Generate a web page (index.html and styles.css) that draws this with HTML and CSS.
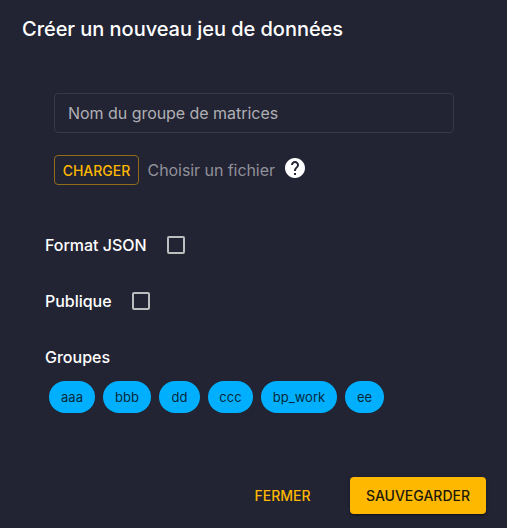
FILE: index.html
```html
<!DOCTYPE html>
<html lang="fr">
<head>
<meta charset="utf-8">
<title>Créer un nouveau jeu de données</title>
<link rel="stylesheet" href="styles.css">
</head>
<body>
<main class="dialog">
  <h2 class="title">Créer un nouveau jeu de données</h2>
  <div class="field">Nom du groupe de matrices</div>
  <div class="upload">
    <button class="btn outlined">CHARGER</button>
    <span class="hint">Choisir un fichier</span>
    <svg class="help" viewBox="0 0 24 24"><path d="M12 2C6.480 2 2 6.480 2 12s4.480 10 10 10 10-4.480 10-10S17.520 2 12 2zm1 17h-2v-2h2v2zm2.070-7.750-.9.920C13.450 12.900 13 13.500 13 15h-2v-.5c0-1.100.45-2.100 1.170-2.830l1.240-1.260c.37-.36.59-.86.59-1.410 0-1.100-.9-2-2-2s-2 .9-2 2H8c0-2.210 1.790-4 4-4s4 1.790 4 4c0 .88-.36 1.680-.93 2.250z"/></svg>
  </div>
  <div class="option"><span>Format JSON</span><span class="box"></span></div>
  <div class="option"><span>Publique</span><span class="box"></span></div>
  <div class="groups">Groupes</div>
  <div class="chips">
    <span class="chip">aaa</span><span class="chip">bbb</span><span class="chip">dd</span><span class="chip">ccc</span><span class="chip">bp_work</span><span class="chip">ee</span>
  </div>
  <footer class="actions">
    <button class="btn text">FERMER</button>
    <button class="btn contained">SAUVEGARDER</button>
  </footer>
</main>
</body>
</html>
```
FILE: styles.css
```css
* { box-sizing: border-box; }
body { margin: 0; background: #222333; }
.dialog {
  width: 507px; height: 528px; overflow: hidden;
  display: flex; flex-direction: column;
  background: #222333; color: #fff;
  font: 400 16px/24px Inter, sans-serif;
}
.title { margin: 13px 22px 0; font-size: 20px; line-height: 32px; font-weight: 500; letter-spacing: -0.04px; }
.field {
  width: 400px; height: 40px; margin: 48px 0 0 54px; padding: 0 13px;
  border: 1px solid #383947; border-radius: 4px;
  line-height: 38px; color: #b0b0b3; letter-spacing: -0.04px;
}
.upload { display: flex; align-items: center; height: 30px; margin: 22px 0 0 54px; }
.hint { width: 127px; margin-left: 8.500px; color: #91919a; letter-spacing: -0.06px; white-space: nowrap; }
.help { width: 24px; height: 24px; margin: -4px 0 0 8.500px; fill: #fff; }
.btn {
  padding: 0; border: 0; border-radius: 4px; background: none;
  font: 500 14px/24px Inter, sans-serif; color: #ffb800; white-space: nowrap;
}
.outlined { width: 85px; height: 30px; padding: 2px 0 0; border: 1px solid #916c1a; }
.option {
  display: flex; align-items: center; gap: 20px;
  height: 24px; margin: 32px 0 0 45px; font-weight: 500; letter-spacing: -0.02px;
}
.upload + .option { margin-top: 48px; }
.box { width: 18px; height: 18px; border: 2px solid #bdbdbd; border-radius: 2px; }
.groups { margin: 32px 0 0 45px; font-weight: 500; }
.chips {
  display: grid; grid-template-columns: 46px 48px 41px 45px 76px 39px;
  gap: 8px; margin: 12px 0 0 49px;
}
.chip {
  height: 32px; border-radius: 16px; text-align: center;
  background: #00b0ff; color: #04293b; font-size: 13px; line-height: 32px;
}
.actions { display: flex; justify-content: flex-end; gap: 8px; margin: 64px 21px 0 0; }
.text { width: 119px; height: 37px; }
.contained {
  width: 136px; height: 37px; background: #ffb800; color: #211a0a;
  box-shadow: 0 3px 1px -2px rgba(0,0,0,.2), 0 2px 2px rgba(0,0,0,.14), 0 1px 5px rgba(0,0,0,.12);
}
```
